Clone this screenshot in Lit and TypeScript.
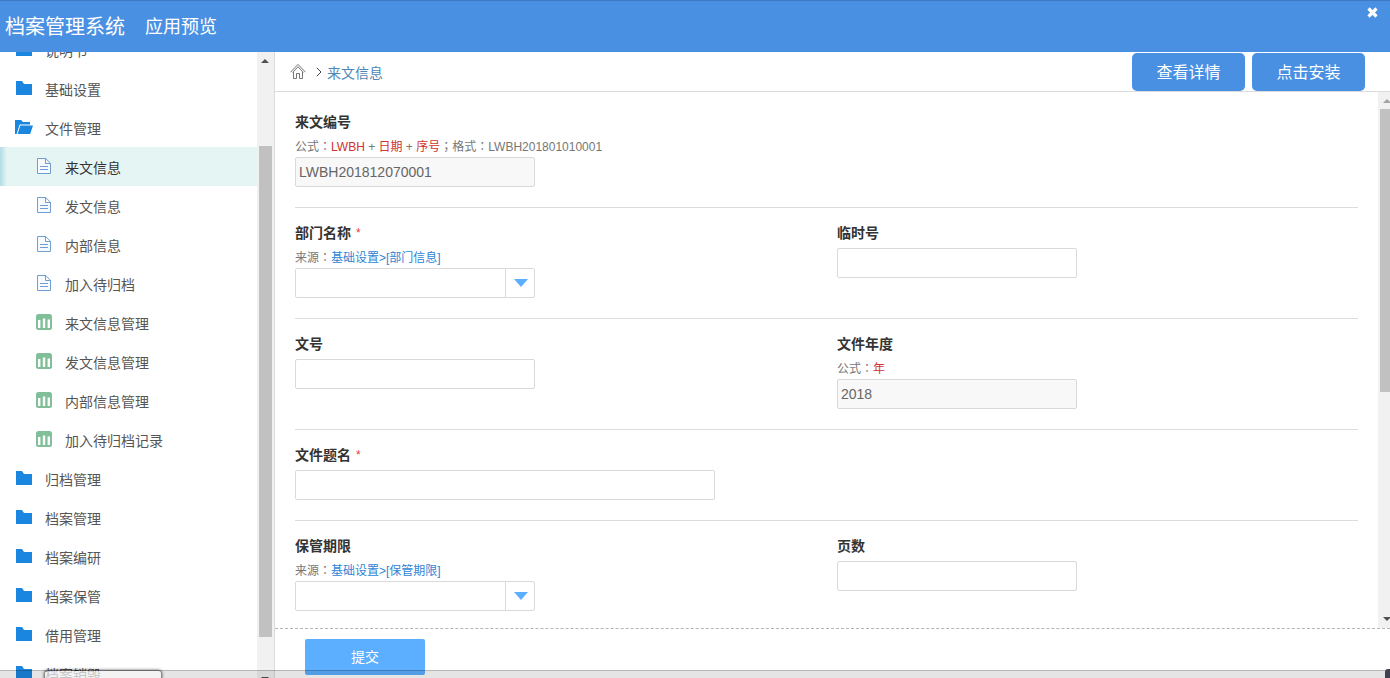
import { LitElement, html, css, svg, nothing, TemplateResult } from "lit";
import { customElement, property, state } from "lit/decorators.js";
import { classMap } from "lit/directives/class-map.js";

type IconName = "folder" | "folder-open" | "doc" | "chart";

interface NavItem {
  label: string;
  icon: IconName;
  child?: boolean;
}

interface HintPart {
  text: string;
  kind?: "token" | "link" | "mark";
}

interface Field {
  id: string;
  label: string;
  type: "text" | "select";
  required?: boolean;
  value?: string;
  readonly?: boolean;
  wide?: boolean;
  hint?: HintPart[];
}

const NAV: NavItem[] = [
  { label: "说明书", icon: "folder" },
  { label: "基础设置", icon: "folder" },
  { label: "文件管理", icon: "folder-open" },
  { label: "来文信息", icon: "doc", child: true },
  { label: "发文信息", icon: "doc", child: true },
  { label: "内部信息", icon: "doc", child: true },
  { label: "加入待归档", icon: "doc", child: true },
  { label: "来文信息管理", icon: "chart", child: true },
  { label: "发文信息管理", icon: "chart", child: true },
  { label: "内部信息管理", icon: "chart", child: true },
  { label: "加入待归档记录", icon: "chart", child: true },
  { label: "归档管理", icon: "folder" },
  { label: "档案管理", icon: "folder" },
  { label: "档案编研", icon: "folder" },
  { label: "档案保管", icon: "folder" },
  { label: "借用管理", icon: "folder" },
  { label: "档案销毁", icon: "folder" },
];

const sourceHint = (target: string): HintPart[] => [
  { text: "来源" },
  { text: "：", kind: "mark" },
  { text: `基础设置>[${target}]`, kind: "link" },
];

const ROWS: Field[][] = [
  [
    {
      id: "docNo",
      label: "来文编号",
      type: "text",
      value: "LWBH201812070001",
      readonly: true,
      hint: [
        { text: "公式" },
        { text: "：", kind: "mark" },
        { text: "LWBH", kind: "token" },
        { text: " + " },
        { text: "日期", kind: "token" },
        { text: " + " },
        { text: "序号", kind: "token" },
        { text: "；", kind: "mark" },
        { text: "格式" },
        { text: "：", kind: "mark" },
        { text: "LWBH201801010001" },
      ],
    },
  ],
  [
    { id: "dept", label: "部门名称", type: "select", required: true, hint: sourceHint("部门信息") },
    { id: "tempNo", label: "临时号", type: "text" },
  ],
  [
    { id: "refNo", label: "文号", type: "text" },
    {
      id: "year",
      label: "文件年度",
      type: "text",
      value: "2018",
      readonly: true,
      hint: [{ text: "公式" }, { text: "：", kind: "mark" }, { text: "年", kind: "token" }],
    },
  ],
  [{ id: "title", label: "文件题名", type: "text", required: true, wide: true }],
  [
    { id: "term", label: "保管期限", type: "select", hint: sourceHint("保管期限") },
    { id: "pages", label: "页数", type: "text" },
  ],
];

const ICONS: Record<IconName, TemplateResult> = {
  folder: svg`<path fill="#1a86e0" d="M1 2h6l2 3h8v11H1z"/>`,
  "folder-open": svg`<path fill="#1a86e0" d="M0 2h6l2 2h7v2.5H4.6L1.6 16H0z"/><path fill="#1a86e0" d="M5.3 7.5H18L15.2 16H2.6z"/>`,
  doc: svg`<path fill="#f7fbff" stroke="#6f9fd0" d="M2.5 1.5h8.2l4.8 4.8v10.2h-13z"/><path fill="none" stroke="#6f9fd0" d="M10.5 1.5v5h5M5 9.5h8M5 12.5h8"/>`,
  chart: svg`<rect x="1" y="1" width="16" height="16" rx="2.5" fill="#81bf99"/><path fill="#fff" d="M3 7h2.4v8H3zM7.8 5.5h2.4V15H7.8zM12.6 6.5H15V15h-2.4z"/>`,
};

const FONT = css`"Liberation Sans", "Noto Sans CJK SC", sans-serif`;

@customElement("side-nav")
class SideNav extends LitElement {
  static styles = css`
    :host { display: flex; width: 275px; flex: none; box-sizing: border-box; border-right: 1px solid #dcdcdc; overflow: hidden; }
    .viewport { flex: 1; overflow: hidden; }
    .list { list-style: none; margin: -22px 0 0; padding: 0; }
    .item { display: flex; align-items: center; height: 39px; box-sizing: border-box; padding: 2px 0 0 15px; color: #555; font: 14px/20px ${FONT}; text-decoration: none; }
    .child { padding-left: 35px; }
    .active { background: linear-gradient(90deg, #b3dbe6, #e5f5f3 7px); color: #333; }
    .icon { width: 18px; height: 18px; flex: none; margin: 0 12px 3px 0; }
    .bar { width: 17px; flex: none; background: #f1f1f1; display: flex; flex-direction: column; align-items: center; box-sizing: border-box; padding: 7px 1px 0 0; }
    .arrow { width: 8px; height: 4px; flex: none; }
    .thumb { width: 13px; height: 491px; flex: none; background: #c1c1c1; margin: 83px 0 40px; }
  `;

  @state() private active = 3;

  render() {
    return html`
      <nav class="viewport" aria-label="导航">
        <ul class="list">
          ${NAV.map(
            (n, i) => html`<li>
              <a
                href="#"
                class=${classMap({ item: true, child: !!n.child, active: i === this.active })}
                @click=${(e: Event) => {
                  e.preventDefault();
                  this.active = i;
                }}
              ><svg class="icon" viewBox="0 0 18 18" aria-hidden="true">${ICONS[n.icon]}</svg>${n.label}</a>
            </li>`
          )}
        </ul>
      </nav>
      <div class="bar" aria-hidden="true">
        <svg class="arrow" viewBox="0 0 8 4"><path fill="#505050" d="M0 4l4-4 4 4z"/></svg>
        <div class="thumb"></div>
        <svg class="arrow" viewBox="0 0 8 4"><path fill="#505050" d="M0 0h8L4 4z"/></svg>
      </div>
    `;
  }
}

@customElement("form-field")
class FormField extends LitElement {
  static styles = css`
    :host { display: block; font: 12px/20px ${FONT}; color: #777; }
    .label { display: flex; align-items: center; width: fit-content; height: 20px; margin-bottom: 5px; font-size: 14px; font-weight: 700; color: #333; }
    .star { color: #e04040; font-size: 12px; font-weight: 400; margin-left: 5px; }
    .hint { height: 20px; line-height: 20px; white-space: pre; }
    .token { color: #d0342e; }
    .link { color: #2f85d6; text-decoration: none; }
    .mark { font-family: "Noto Sans CJK TC", sans-serif; line-height: 1; }
    .control { display: grid; width: 240px; }
    .wide { width: 420px; }
    .box { grid-area: 1 / 1; width: 100%; height: 30px; box-sizing: border-box; margin: 0; padding: 0 3px; border: 1px solid #d9d9d9; border-radius: 2px; background: #fff; color: #555; font: 14px/20px ${FONT}; appearance: none; outline: none; }
    .box:focus { border-color: #5cafff; }
    .readonly { background: #f8f8f8; color: #666; }
    .drop { grid-area: 1 / 1; justify-self: end; box-sizing: border-box; width: 30px; height: 30px; border-left: 1px solid #d9d9d9; display: grid; place-items: center; pointer-events: none; }
  `;

  @property({ attribute: false }) field!: Field;

  render() {
    const f = this.field;
    return html`
      <label class="label" for=${f.id}>${f.label}${f.required ? html`<span class="star">*</span>` : nothing}</label>
      ${f.hint
        ? html`<div class="hint">${f.hint.map((p) =>
            p.kind === "link"
              ? html`<a class="link" href="#">${p.text}</a>`
              : html`<span class=${p.kind ?? "plain"}>${p.text}</span>`
          )}</div>`
        : nothing}
      <div class=${classMap({ control: true, wide: !!f.wide })}>
        ${f.type === "select"
          ? html`<select class="box" id=${f.id}><option value=""></option></select>
              <span class="drop"><svg width="14" height="8" viewBox="0 0 14 8" aria-hidden="true"><path fill="#5cafff" d="M0 0h14L7 8z"/></svg></span>`
          : html`<input
              class=${classMap({ box: true, readonly: !!f.readonly })}
              id=${f.id}
              type="text"
              .value=${f.value ?? ""}
              ?readonly=${f.readonly}
            />`}
      </div>
    `;
  }
}

@customElement("app-root")
class AppRoot extends LitElement {
  static styles = css`
    :host { display: flex; flex-direction: column; height: 100vh; position: relative; overflow: hidden; background: #fff; font: 14px/20px ${FONT}; }
    .top { display: flex; align-items: center; height: 52px; flex: none; box-sizing: border-box; padding: 0 12px 0 5px; border-top: 1px solid #3c7bc4; background: #4a90e2; color: #fff; }
    .system { margin: 0; font-size: 20px; line-height: 28px; font-weight: 400; }
    .preview { margin-left: 20px; font-size: 18px; line-height: 28px; }
    .close { margin: 6px 0 0 auto; align-self: flex-start; display: flex; padding: 0; border: 0; background: none; cursor: pointer; }
    .body { display: flex; flex: 1; min-height: 0; }
    .main { flex: 1; min-width: 0; display: flex; flex-direction: column; }
    .crumbs { display: flex; align-items: center; height: 40px; flex: none; box-sizing: border-box; padding: 0 25px 0 15px; border-bottom: 1px solid #dcdcdc; }
    .home, .sep { display: flex; }
    .sep { margin: 0 5px 0 10px; }
    .here { color: #4f86b8; text-decoration: none; margin-top: 2px; }
    .actions { display: flex; gap: 7px; margin-left: auto; }
    .action { width: 113px; height: 38px; border: 0; border-radius: 5px; padding: 2px 0 0; background: #4a90e2; color: #fff; font: 16px/20px ${FONT}; cursor: pointer; }
    .scroller { display: flex; flex: 1; min-height: 0; overflow: hidden; }
    .form { flex: 1; min-width: 0; overflow: hidden; padding: 5px 20px 0; }
    .row { display: grid; grid-template-columns: 1fr 1fr; column-gap: 21px; padding: 15px 0 20px; border-bottom: 1px solid #dcdcdc; }
    .bar { width: 12px; flex: none; background: #f1f1f1; display: flex; flex-direction: column; align-items: flex-end; justify-content: space-between; overflow: hidden; box-sizing: border-box; padding: 7px 0 7px; }
    .thumb { width: 10px; height: 283px; background: #c1c1c1; margin: 6px 0 auto; }
    .tip { width: 7px; height: 4px; flex: none; }
    .foot { height: 50px; flex: none; box-sizing: border-box; border-top: 1px dashed #b5b5b5; padding: 10px 30px 0; }
    .submit { width: 120px; height: 36px; border: 0; border-radius: 2px; padding: 0; background: #5cafff; color: #fff; font: 14px/20px ${FONT}; cursor: pointer; }
    .shade { position: absolute; left: 0; right: 0; bottom: 0; height: 8px; box-sizing: border-box; border-top: 1px solid rgba(0, 0, 0, 0.2); background: rgba(0, 0, 0, 0.1); pointer-events: none; }
    .bubble { position: absolute; left: 45px; bottom: -20px; width: 116px; height: 27px; border-radius: 3px; background: rgba(250, 250, 250, 0.7); box-shadow: 0 0 3px 1px rgba(0, 0, 0, 0.65); pointer-events: none; }
    .corner { position: absolute; right: 0; bottom: 0; width: 5px; height: 9px; border-radius: 3px 0 0 0; background: #3f4152; }
  `;

  render() {
    return html`
      <header class="top">
        <h1 class="system">档案管理系统</h1>
        <span class="preview">应用预览</span>
        <button class="close" aria-label="关闭">
          <svg width="11" height="11" viewBox="0 0 11 11"><path stroke="#fff" stroke-width="3.2" d="M1.5 1.5l8 8M9.5 1.5l-8 8"/></svg>
        </button>
      </header>
      <div class="body">
        <side-nav></side-nav>
        <main class="main">
          <div class="crumbs">
            <a class="home" href="#" aria-label="首页">
              <svg width="16" height="17" viewBox="0 0 16 17" fill="none" stroke="#666" stroke-width=".9"><path d="M.5 9.2L8 1.4l7.5 7.8M2.6 9.4L8 3.8l5.4 5.6M3.5 9v6.5h3v-5h3v5h3V9"/></svg>
            </a>
            <span class="sep"><svg width="6" height="10" viewBox="0 0 6 10" fill="none" stroke="#444"><path d="M.8.8L5 5 .8 9.2"/></svg></span>
            <a class="here" href="#">来文信息</a>
            <div class="actions">
              <button class="action">查看详情</button>
              <button class="action">点击安装</button>
            </div>
          </div>
          <div class="scroller">
            <form class="form" id="entry" @submit=${(e: Event) => e.preventDefault()}>
              ${ROWS.map(
                (r) => html`<div class="row">${r.map((f) => html`<form-field .field=${f}></form-field>`)}</div>`
              )}
            </form>
            <div class="bar" aria-hidden="true">
              <svg class="tip" viewBox="0 0 7 4"><path fill="#a3a3a3" d="M0 4l4-4 4 4z"/></svg>
              <div class="thumb"></div>
              <svg class="tip" viewBox="0 0 7 4"><path fill="#505050" d="M0 0h8L4 4z"/></svg>
            </div>
          </div>
          <footer class="foot"><button class="submit" type="submit" form="entry">提交</button></footer>
        </main>
      </div>
      <div class="shade"></div>
      <div class="bubble"></div>
      <div class="corner"></div>
    `;
  }
}
